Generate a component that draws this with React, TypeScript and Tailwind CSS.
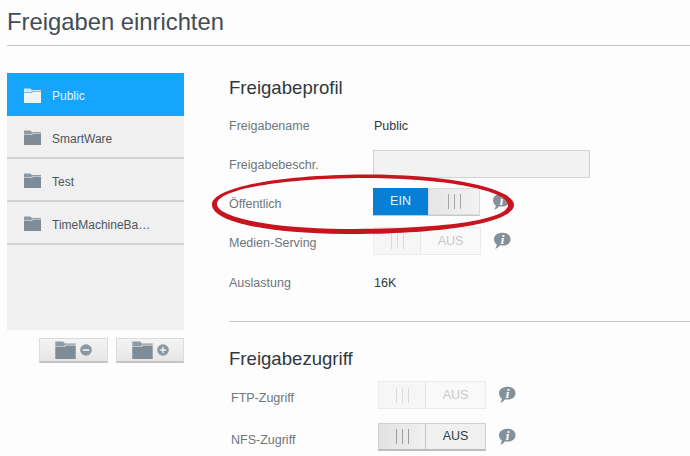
import React from "react";

function Folder({ light = false, big = false }: { light?: boolean; big?: boolean }) {
  const c = light ? "#eef5f9" : "#7d8c96";
  return (
    <svg width={big ? 21 : 17} height={big ? 18 : 15} viewBox="0 0 17 15" className="shrink-0">
      <path d="M0 0.5H6.5L8 2H17V3.2H8.5L7 4.5H0Z" fill={c} opacity="0.85" />
      <path d="M0 5H7.5L9 3.8H17V15H0Z" fill={c} />
    </svg>
  );
}

function Info() {
  return (
    <svg width="18" height="18" viewBox="0 0 18 18" className="shrink-0">
      <path d="M9.5 0.8C14 0.8 17.5 3.2 17.5 7.2C17.5 11.2 14 13.6 9.5 13.6C8.6 13.6 7.8 13.5 7 13.3C6 15.1 4.2 16.4 2 16.8C3.2 15.4 3.7 14 3.7 12.4C2 11.2 1 9.4 1 7.2C1 3.2 5 0.8 9.5 0.8Z" fill="#85919a" />
      <text x="9.5" y="12" textAnchor="middle" fontSize="13" fontWeight="700" fontStyle="italic" fontFamily="'Liberation Serif', serif" fill="#ffffff">i</text>
    </svg>
  );
}

function Bars({ color }: { color: string }) {
  return (
    <div className="flex gap-[5px]">
      <div className="h-[15px] w-px" style={{ backgroundColor: color }} />
      <div className="h-[15px] w-px" style={{ backgroundColor: color }} />
      <div className="h-[15px] w-px" style={{ backgroundColor: color }} />
    </div>
  );
}

function ToggleOn() {
  return (
    <div className="flex h-[28px] w-[107px] border-b border-b-[#c8c8c8]">
      <div className="flex w-[55px] items-center justify-center bg-[#0580d6] text-[12.5px] text-[#e8f4fc]">EIN</div>
      <div className="flex flex-1 items-center justify-center border border-[#dcdcdc] bg-gradient-to-r from-[#e6e6e6] to-[#f2f2f2]">
        <Bars color="#a6a6a6" />
      </div>
    </div>
  );
}

function ToggleOff({ disabled }: { disabled: boolean }) {
  return (
    <div className={`flex h-[28px] w-[108px] border ${disabled ? "border-[#ececec]" : "border-[#cfcfcf] border-b-[#bdbdbd] border-b-2"}`}>
      <div className={`flex w-[47px] items-center justify-center border-r ${disabled ? "border-r-[#e8e8e8] bg-[#f6f6f6]" : "border-r-[#c6c6c6] bg-gradient-to-r from-[#e2e2e2] to-[#f0f0f0]"}`}>
        <Bars color={disabled ? "#dadada" : "#9c9c9c"} />
      </div>
      <div className={`flex flex-1 items-center justify-center text-[12.5px] ${disabled ? "bg-[#f9f9f9] text-[#c9c9c9]" : "bg-[#f0f0f0] text-[#333b40]"}`}>AUS</div>
    </div>
  );
}

function SideItem({ name, active = false }: { name: string; active?: boolean }) {
  return (
    <div className={`flex h-[43px] items-center gap-[11px] pl-[17px] pt-[2px] text-[12px] ${active ? "bg-[#15a5fd] text-[#e4f4ff]" : "border-b-2 border-b-[#d2d2d2] text-[#4e565b]"}`}>
      <Folder light={active} />
      <span className={active ? "pt-0" : "pt-[2px]"}>{name}</span>
    </div>
  );
}

function Row({ label, className, labelClass, children }: { label: string; className: string; labelClass: string; children: React.ReactNode }) {
  return (
    <div className={`flex items-center ${className}`}>
      <span className={`w-[144px] shrink-0 text-[12.5px] text-[#6d767c] ${labelClass}`}>{label}</span>
      {children}
    </div>
  );
}

export default function App() {
  return (
    <div className="relative h-[456px] w-[690px] overflow-hidden bg-[#fdfdfd] font-['Liberation_Sans',Arial,sans-serif]">
      <header className="ml-[7px] flex h-[46px] items-start border-b border-b-[#c9c9c9] pt-[8px]">
        <h1 className="text-[23.8px] leading-[28px] text-[#434c54]">Freigaben einrichten</h1>
      </header>

      <main className="flex pt-[27px]">
        <aside className="ml-[7px] w-[177px] shrink-0">
          <div className="h-[257px] bg-[#f0f0f0]">
            <SideItem name="Public" active />
            <SideItem name="SmartWare" />
            <SideItem name="Test" />
            <SideItem name="TimeMachineBa…" />
          </div>
          <div className="mt-[8px] flex justify-end gap-[8px]">
            <button className="flex h-[25px] w-[69px] items-center justify-center gap-[4px] border border-[#dcdcdc] border-b-2 border-b-[#c4c4c4] bg-gradient-to-b from-[#f4f4f4] to-[#e6e6e6]">
              <Folder big />
              <svg width="12" height="12" viewBox="0 0 12 12"><circle cx="6" cy="6" r="5.8" fill="#8b989f" /><rect x="2.8" y="5.3" width="6.4" height="1.4" fill="#fff" /></svg>
            </button>
            <button className="flex h-[25px] w-[68px] items-center justify-center gap-[4px] border border-[#dcdcdc] border-b-2 border-b-[#c4c4c4] bg-gradient-to-b from-[#f4f4f4] to-[#e6e6e6]">
              <Folder big />
              <svg width="12" height="12" viewBox="0 0 12 12"><circle cx="6" cy="6" r="5.8" fill="#8b989f" /><rect x="2.8" y="5.4" width="6.4" height="1.2" fill="#fff" /><rect x="5.4" y="2.8" width="1.2" height="6.4" fill="#fff" /></svg>
            </button>
          </div>
        </aside>

        <section className="ml-[45px] flex-1">
          <h2 className="h-[31px] text-[18.6px] leading-[30px] text-[#30383e]">Freigabeprofil</h2>
          <Row label="Freigabename" className="h-[41px]" labelClass="pt-[3px]">
            <span className="pl-px pt-[3px] text-[12.5px] text-[#30383e]">Public</span>
          </Row>
          <Row label="Freigabebeschr." className="h-[38px]" labelClass="pt-[2px]">
            <div className="h-[28px] w-[217px] border border-[#d2d2d2] bg-[#f2f2f2]" />
          </Row>
          <Row label="Öffentlich" className="h-[38px]" labelClass="pt-[4px]">
            <div className="flex items-center gap-[12px]"><ToggleOn /><Info /></div>
          </Row>
          <Row label="Medien-Serving" className="h-[40px]" labelClass="pt-[4px]">
            <div className="flex items-center gap-[12px]"><ToggleOff disabled /><Info /></div>
          </Row>
          <Row label="Auslastung" className="h-[42px]" labelClass="pt-[2px]">
            <span className="pl-px pt-[2px] text-[12.5px] text-[#30383e]">16K</span>
          </Row>
          <div className="mt-[18px] border-t border-t-[#c9c9c9]" />
          <h2 className="mt-[22px] text-[18.6px] leading-[30px] text-[#30383e]">Freigabezugriff</h2>
          <div className="ml-[2px] mt-[7px] flex h-[28px] items-center">
            <span className="w-[147px] shrink-0 pt-[6px] text-[12.5px] text-[#6d767c]">FTP-Zugriff</span>
            <div className="flex items-center gap-[12px]"><ToggleOff disabled /><Info /></div>
          </div>
          <div className="ml-[2px] mt-[14px] flex h-[28px] items-center">
            <span className="w-[147px] shrink-0 pt-[6px] text-[12.5px] text-[#6d767c]">NFS-Zugriff</span>
            <div className="flex items-center gap-[12px]"><ToggleOff disabled={false} /><Info /></div>
          </div>
        </section>
      </main>

      <svg className="pointer-events-none absolute left-0 top-0" width="690" height="456" viewBox="0 0 690 456">
        <path d="M212 204C213 189 270 175 366 174.500C452 174.500 514 189 514 205C514 220 460 234 344 234C262 233 211 221 212 204ZM217 204C217 217 268 228 344 229C456 229 508 218 508 205C508 191 450 178.500 366 178C272 178.500 217 191 217 204Z" fill="#c8141e" fillRule="evenodd" />
      </svg>
    </div>
  );
}
